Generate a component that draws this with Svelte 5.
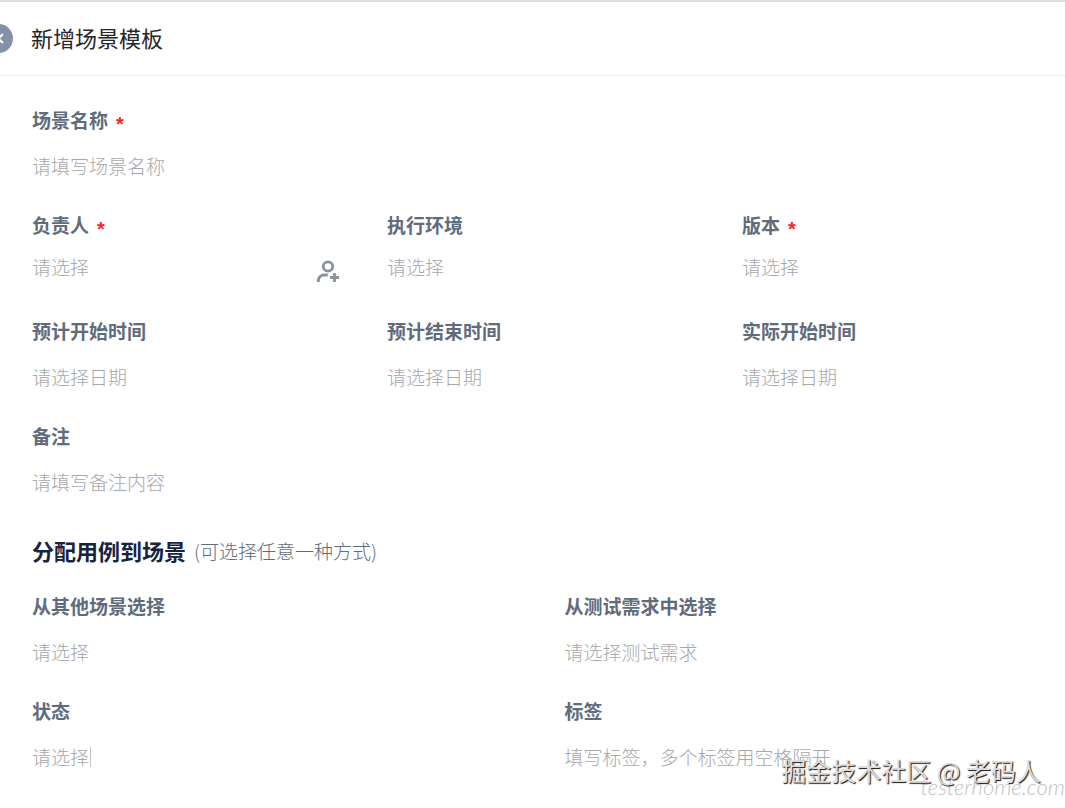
<script>
  let caseName = $state('');
  let remark = $state('');
  let tags = $state('');

  const people = [
    { id: 'owner', label: '负责人', required: true, invite: true },
    { id: 'env', label: '执行环境' },
    { id: 'version', label: '版本', required: true }
  ];

  const dates = [
    { id: 'plan-start', label: '预计开始时间' },
    { id: 'plan-end', label: '预计结束时间' },
    { id: 'real-start', label: '实际开始时间' }
  ];
</script>

{#snippet fieldLabel(id, text, required = false)}
  <label class="label" for={id}>
    {text}
    {#if required}<span class="required">*</span>{/if}
  </label>
{/snippet}

<div class="page">
  <header class="header">
    <button class="back" type="button" aria-label="返回">
      <svg width="29" height="29" viewBox="0 0 29 29" aria-hidden="true">
        <circle cx="14.5" cy="14.5" r="14.5" fill="#8490a8" />
        <path d="M19 10l-4.5 4.5L19 19" fill="none" stroke="#fff" stroke-width="2" />
      </svg>
    </button>
    <h1>新增场景模板</h1>
  </header>

  <form class="form">
    <div class="row">
      <div class="field">
        {@render fieldLabel('name', '场景名称', true)}
        <input id="name" class="control" placeholder="请填写场景名称" bind:value={caseName} />
      </div>
    </div>

    <div class="row thirds compact">
      {#each people as item}
        <div class="field">
          {@render fieldLabel(item.id, item.label, item.required)}
          <div class="line">
            <select id={item.id} class="control">
              <option value="">请选择</option>
            </select>
            {#if item.invite}
              <button class="invite" type="button" aria-label="添加负责人">
                <svg width="24" height="24" viewBox="0 0 24 24" fill="none" stroke="#8a91a3" stroke-width="2.8" aria-hidden="true">
                  <circle cx="12" cy="6.5" r="4.7" />
                  <path d="M2.3 22v-1.2c0-3.6 2.6-5.8 6-5.8h3.5" />
                  <path d="M18.5 13v9M14 17.5h9" />
                </svg>
              </button>
            {/if}
          </div>
        </div>
      {/each}
    </div>

    <div class="row thirds">
      {#each dates as item}
        <div class="field">
          {@render fieldLabel(item.id, item.label)}
          <input id={item.id} class="control" placeholder="请选择日期" />
        </div>
      {/each}
    </div>

    <div class="row">
      <div class="field">
        {@render fieldLabel('remark', '备注')}
        <input id="remark" class="control" placeholder="请填写备注内容" bind:value={remark} />
      </div>
    </div>

    <div class="section">
      <h2>分配用例到场景</h2>
      <span>(可选择任意一种方式)</span>
    </div>

    <div class="row halves">
      <div class="field">
        {@render fieldLabel('scene', '从其他场景选择')}
        <select id="scene" class="control">
          <option value="">请选择</option>
        </select>
      </div>
      <div class="field">
        {@render fieldLabel('demand', '从测试需求中选择')}
        <input id="demand" class="control" placeholder="请选择测试需求" />
      </div>
    </div>

    <div class="row halves">
      <div class="field">
        {@render fieldLabel('status', '状态')}
        <div class="line">
          <select id="status" class="control fit">
            <option value="">请选择</option>
          </select>
          <span class="caret"></span>
        </div>
      </div>
      <div class="field">
        {@render fieldLabel('tags', '标签')}
        <input id="tags" class="control" placeholder="填写标签，多个标签用空格隔开" bind:value={tags} />
      </div>
    </div>
  </form>

  <div class="site-mark">testerhome.com</div>
  <div class="author-mark">掘金技术社区 @ 老码人</div>
</div>

<style>
  :global(body) {
    margin: 0;
    background: #fff;
  }

  .page {
    position: relative;
    min-height: 100vh;
    overflow: hidden;
    font-family: 'Noto Sans CJK SC', sans-serif;
    font-size: 19px;
    color: #606b7b;
  }

  .header {
    position: relative;
    display: flex;
    align-items: center;
    height: 73px;
    padding-left: 31px;
    border-top: 2px solid #dfdfdf;
    border-bottom: 1px solid #eff0f1;
  }

  h1 {
    margin: 0 0 4px;
    font-size: 22px;
    font-weight: 400;
    line-height: 32px;
    color: #262626;
  }

  button {
    padding: 0;
    border: 0;
    background: none;
    cursor: pointer;
  }

  .back {
    position: absolute;
    left: -16px;
    top: 22px;
    height: 29px;
  }

  svg {
    display: block;
  }

  .form {
    padding-top: 30px;
  }

  .row {
    display: grid;
    margin-bottom: 22px;
  }

  .thirds {
    grid-template-columns: repeat(3, 1fr);
  }

  .halves {
    grid-template-columns: repeat(2, 1fr);
  }

  .field {
    display: flex;
    flex-direction: column;
    gap: 8px;
    min-width: 0;
    padding-left: 32px;
  }

  .label {
    display: flex;
    align-items: center;
    gap: 8px;
    height: 28px;
    font-weight: 700;
    line-height: 28px;
  }

  .required {
    padding-top: 8px;
    font-family: 'Liberation Sans', sans-serif;
    font-size: 20px;
    line-height: 20px;
    color: #f5222d;
  }

  .control {
    box-sizing: border-box;
    width: 100%;
    height: 47px;
    padding: 0;
    border: 0;
    outline: 0;
    background: none;
    appearance: none;
    font: inherit;
    font-weight: 300;
    color: #a6a8ac;
  }

  .control::placeholder {
    color: #a6a8ac;
    opacity: 1;
  }

  .line {
    display: flex;
    align-items: center;
  }

  .fit {
    width: auto;
  }

  .caret {
    width: 1px;
    height: 20px;
    background: #c4c4c4;
  }

  .compact {
    margin-bottom: 32px;
  }

  .compact .control {
    height: 38px;
  }

  .invite {
    padding-top: 12px;
    margin-right: 15px;
  }

  .section {
    display: flex;
    align-items: center;
    gap: 8px;
    height: 46px;
    margin-bottom: 19px;
    padding-left: 32px;
    font-weight: 300;
  }

  h2 {
    margin: 0;
    font-size: 22px;
    font-weight: 700;
    color: #172440;
  }

  .author-mark {
    position: absolute;
    right: 24px;
    bottom: 20px;
    font-size: 25px;
    line-height: 36px;
    color: #dcdcdc;
    text-shadow: 1px 1px 1px #111;
    pointer-events: none;
  }

  .site-mark {
    position: absolute;
    right: 0;
    bottom: 9px;
    font-family: Lato, cursive;
    font-size: 22px;
    font-style: italic;
    font-weight: 300;
    line-height: 24px;
    color: #c2c2c2;
    pointer-events: none;
  }
</style>
